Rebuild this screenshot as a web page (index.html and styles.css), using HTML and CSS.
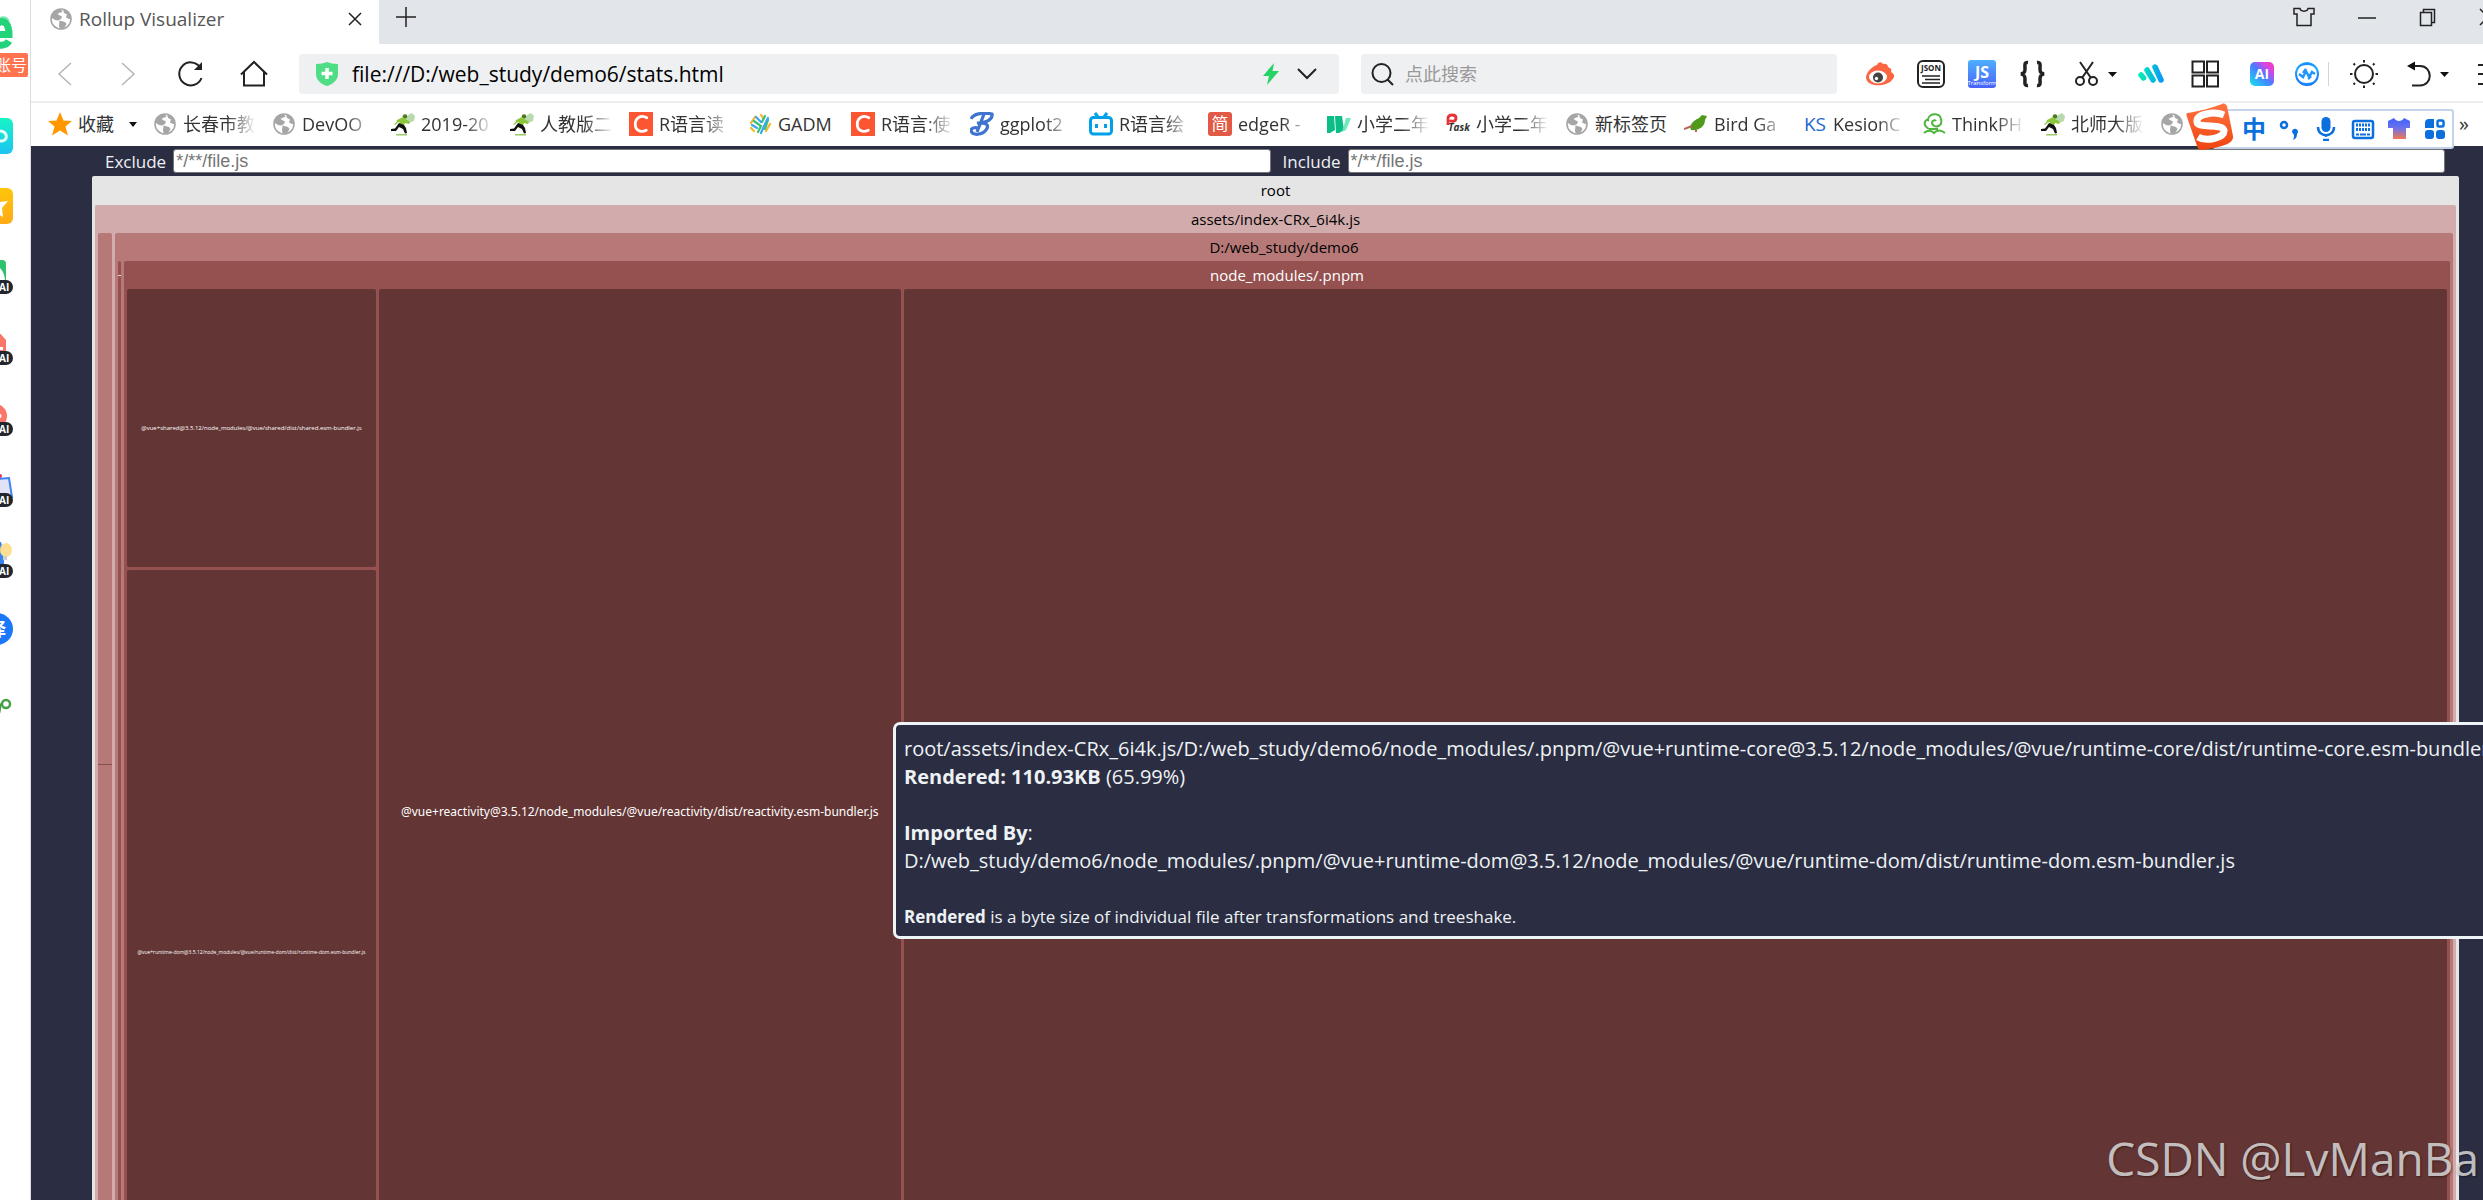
FILE: index.html
```html
<!DOCTYPE html>
<html lang="zh-CN">
<head>
<meta charset="utf-8">
<title>Rollup Visualizer</title>
<link rel="stylesheet" href="styles.css">
</head>
<body>
<svg class="defs" aria-hidden="true">
  <defs>
    <linearGradient id="teal" x1="0" y1="0" x2="0" y2="1"><stop offset="0" stop-color="#18f5c4"/><stop offset="1" stop-color="#1cc3f3"/></linearGradient>
    <linearGradient id="gold" x1="0" y1="0" x2="0" y2="1"><stop offset="0" stop-color="#ffc50a"/><stop offset="1" stop-color="#ffaa18"/></linearGradient>
    <linearGradient id="blue" x1="0" y1="0" x2="0" y2="1"><stop offset="0" stop-color="#4cb0ff"/><stop offset="1" stop-color="#4a62fa"/></linearGradient>
    <linearGradient id="aurora" x1="0" y1="1" x2="1" y2="0"><stop offset="0" stop-color="#12e6f0"/><stop offset=".5" stop-color="#4a7bff"/><stop offset=".75" stop-color="#d445e6"/><stop offset="1" stop-color="#ff3aa8"/></linearGradient>
    <linearGradient id="wave" gradientUnits="userSpaceOnUse" x1="2" y1="0" x2="27" y2="0"><stop offset="0" stop-color="#05f0b0"/><stop offset="1" stop-color="#0793ff"/></linearGradient>
    <linearGradient id="sky" x1="0" y1="0" x2="0" y2="1"><stop offset="0" stop-color="#27c3ff"/><stop offset="1" stop-color="#1167f5"/></linearGradient>
    <linearGradient id="flame" x1="0" y1="0" x2="0" y2="1"><stop offset="0" stop-color="#ff7340"/><stop offset="1" stop-color="#ee4410"/></linearGradient>
    <linearGradient id="tee" x1="0" y1="0" x2="0" y2="1"><stop offset="0" stop-color="#3c62ff"/><stop offset=".5" stop-color="#6f72e8"/><stop offset="1" stop-color="#f4774f"/></linearGradient>
    <symbol id="globe" viewBox="0 0 24 24">
      <circle cx="12" cy="12" r="10" fill="#fff" stroke="#a6a6a6" stroke-width="1.6"/>
      <path fill="#a6a6a6" d="M12 2c-5 0-9 3.600-9.800 8.500l3.800 2.500 3 .5 3-1.500 1-2.500-3-1.500-1.500-1 2.500-1.500 2.500-.5zM14 2.300l1 3.700 3 1.500-1 3 3 1.500 1.800 0c0-4.500-3.300-8.800-7.800-9.700zM10.500 13.500l5.500 1.500 1.500 2-2.500 4.500-4 .5-1-3z"/>
    </symbol>
    <symbol id="runner" viewBox="0 0 24 24">
      <path fill="#b9d9ae" d="M17 3l4-2 3 3-1 5-5 2-3-3z"/>
      <circle cx="14" cy="4.500" r="2.300" fill="#4b7a1e"/>
      <path fill="#8cc63a" d="M6 8l6-3 4 3 3 2-1 2-4-1-2 5-5-2 2-4-4 1z"/>
      <path fill="#111" d="M8 11l5 2 2 3 1 5-2 .5-2-4.500-4-2-3 4-5 0 0-2 4-.5z"/>
      <path fill="#9ccb62" d="M5 22h11v1.500H5zM3 12l3-2 1 1-3 2z"/>
    </symbol>
    <symbol id="red-c" viewBox="0 0 24 24">
      <path fill="#fc5531" d="M0 0h24v24H0z"/>
      <path fill="none" stroke="#fff" stroke-width="2.800" stroke-linecap="round" d="M17.800 5.800C12.500 2.500 6.300 5.500 6.300 12.200c0 6.300 5.200 8.600 11 6"/>
    </symbol>
  </defs>
</svg>

<div class="window">
  <aside class="sidebar">
    <button class="logo" aria-label="浏览器首页"><svg width="31" height="54" viewBox="0 0 31 54"><path fill="none" stroke="#22d37a" stroke-width="7" d="M-2 23C6 18 9 27 9 34.500H-4M9 41C6 46-1 46-4 44"/><path fill="#7be8ae" d="M0 17c4-2 9 0 10 5-2-3-6-4-10-4z"/></svg></button>
    <span class="account">账号</span>
    <button class="app" aria-label="应用"><svg width="31" height="36"><rect x="-20" width="33" height="36" rx="6" fill="url(#teal)"/><path d="M0 13c8 0 8 10 2 10H-2" fill="none" stroke="#e4fffc" stroke-width="3"/></svg></button>
    <button class="app" aria-label="收藏"><svg width="31" height="36"><rect x="-20" width="33" height="36" rx="6" fill="url(#gold)"/><path d="M-4 14L0 14 8 13 2 20 3 29-4 25z" fill="#fff"/></svg></button>
    <button class="app ai" aria-label="AI 图片"><svg width="31" height="36"><rect x="-20" y="2" width="26" height="30" rx="4" fill="#2fc26e"/><path d="M0 10c3 3 5 8 5 13H0z" fill="#fff"/></svg><span class="pill">AI</span></button>
    <button class="app ai" aria-label="AI 文档"><svg width="31" height="36"><path d="M-9 3H-1L6 11V32H-9z" fill="#fb7668"/><path d="M0 18h3v3H0z" fill="#fff"/></svg><span class="pill">AI</span></button>
    <button class="app ai" aria-label="AI 阅读"><svg width="31" height="36"><circle cx="-5" cy="16" r="12" fill="#fb7668"/><circle cx="-1" cy="16" r="2.500" fill="#fff"/></svg><span class="pill">AI</span></button>
    <button class="app ai" aria-label="AI 写作"><svg width="31" height="36"><path d="M-4 8L9 7 12 26H-4z" fill="#dfe3f5" stroke="#3f82f5" stroke-width="2"/><circle cx="0" cy="5" r="2" fill="#e8305e"/></svg><span class="pill">AI</span></button>
    <button class="app ai" aria-label="AI 灵感"><svg width="31" height="36"><path d="M-6 0H1L4 10V24H-6z" fill="#3a82f2"/><ellipse cx="6" cy="8" rx="6" ry="7" fill="#fddf92"/><path d="M3 14h4v4H3z" fill="#cfd0c8"/></svg><span class="pill">AI</span></button>
    <button class="app translate" aria-label="翻译"><span>译</span></button>
    <button class="app" aria-label="更多"><svg width="31" height="36"><g fill="none" stroke="#45a049" stroke-width="2.500"><ellipse cx="6" cy="14" rx="4" ry="4"/><path d="M-2 15c2-3 3 0 1 8"/></g></svg></button>
  </aside>

  <div class="browser">
    <header class="tabs">
      <div class="tab">
        <svg width="24" height="24"><use href="#globe"/></svg>
        <span class="tab-title">Rollup Visualizer</span>
        <button aria-label="关闭标签"><svg width="14" height="14"><path d="M1 1L13 13M13 1L1 13" class="line"/></svg></button>
      </div>
      <button class="new-tab" aria-label="新建标签"><svg width="20" height="20"><path d="M10 0V20M0 10H20" class="line"/></svg></button>
      <div class="win-controls">
        <button aria-label="皮肤"><svg width="22" height="20"><path d="M1 1.500H7C7.500 5 14.500 5 15 1.500H21V7H18V18.500H4V7H1z" class="line"/></svg></button>
        <button aria-label="最小化"><svg width="20" height="20"><path d="M1 11H19" class="line"/></svg></button>
        <button aria-label="还原"><svg width="18" height="20"><path d="M1.500 5.500H12.500V18.500H1.500zM4.500 5V2.500H15.500V15.500H13" class="line"/></svg></button>
        <button aria-label="关闭"><svg width="18" height="20"><path d="M1 2L17 18M17 2L1 18" class="line"/></svg></button>
      </div>
    </header>

    <div class="toolbar">
      <nav class="nav">
        <button aria-label="后退"><svg width="28" height="28"><path d="M20 3L8 14 20 25" class="line faint"/></svg></button>
        <button aria-label="前进"><svg width="28" height="28"><path d="M8 3L20 14 8 25" class="line faint"/></svg></button>
        <button aria-label="刷新"><svg width="28" height="28"><path d="M24.500 18A11.500 11.500 0 1 1 23 7" class="line bold"/><path d="M25 2v8h-8z" fill="#222"/></svg></button>
        <button aria-label="主页"><svg width="28" height="28"><path d="M1 14.500L14 2 27 14.500M4 12V25.500H24V12" class="line bold"/></svg></button>
      </nav>
      <div class="field address">
        <svg width="22" height="24"><path d="M0 2C5 2 8 1 11 0 14 1 17 2 22 2V12C22 18 17 22 11 24 5 22 0 18 0 12z" fill="#4fdd86"/><path d="M11 6V17M5.500 11.500H16.500" stroke="#fff" stroke-width="3.500"/></svg>
        <input type="text" aria-label="地址" value="file:///D:/web_study/demo6/stats.html">
        <button aria-label="极速模式"><svg width="18" height="22"><path d="M12 0L1 13H7L5 22 17 8H10.500z" fill="#25d366"/></svg></button>
        <button aria-label="展开"><svg width="20" height="22"><path d="M1 6L10 15 19 6" class="line bold"/></svg></button>
      </div>
      <div class="field search">
        <svg width="24" height="24"><circle cx="10.500" cy="11" r="9" class="line bold"/><path d="M16.500 17.500L22 23" class="line bold"/></svg>
        <input type="text" aria-label="搜索" placeholder="点此搜索">
      </div>
      <div class="tools">
        <button aria-label="微博"><svg width="28" height="28"><path fill="#fb6541" d="M0 17C1 11 7 6 11 5c1-3 4-4 6-1 2-1 5 0 5 3 3 1 4 3 3 5 4 2 4 5 1 8-5 7-26 8-26-3z"/><ellipse cx="12" cy="17" rx="9" ry="6.500" fill="#fff"/><circle cx="12" cy="17.500" r="5" fill="#444"/><circle cx="10.500" cy="18.500" r="1.700" fill="#fff"/></svg></button>
        <button aria-label="JSON"><svg width="28" height="28"><rect x="1" y="1" width="26" height="26" rx="5" class="line bold"/><text x="14" y="11" class="mini dark">JSON</text><path d="M5 16H23M8 19.500H23M5 23H23" class="line"/></svg></button>
        <button aria-label="JS Transform"><svg width="28" height="28"><rect width="28" height="28" rx="3" fill="url(#blue)"/><text x="14" y="18" class="big">JS</text><text x="14" y="25" class="mini thin">Transform</text></svg></button>
        <button aria-label="格式化"><svg width="28" height="28"><path d="M9 2.500C5 2 6 5 6 9 6 13 4.500 13.500 2 14 4.500 14.500 6 15 6 19 6 23 5 26 9 25.500M18 2.500C22 2 21 5 21 9 21 13 22.500 13.500 25 14 22.500 14.500 21 15 21 19 21 23 22 26 18 25.500" fill="none" stroke="#222" stroke-width="3.500"/></svg></button>
        <button aria-label="截图"><svg width="44" height="28"><path d="M7 2L18 18M20 2L9 18" class="line bold"/><circle cx="7" cy="21" r="4" class="line bold"/><circle cx="20" cy="21" r="4" class="line bold"/><path d="M35 12h9l-4.500 5z" fill="#111"/></svg></button>
        <button aria-label="音乐"><svg width="28" height="28"><path d="M4 15L6.500 18M10 10L16 20M18 7L24 20" fill="none" stroke="url(#wave)" stroke-width="5.500" stroke-linecap="round"/></svg></button>
        <button aria-label="应用"><svg width="28" height="28"><path d="M1.500 1.500H13V12.500H1.500zM16 1.500H27V12.500H16zM1.500 15.500H13V26.500H1.500zM16 15.500H27V26.500H16z" class="line bold"/></svg></button>
        <button aria-label="AI 助手"><svg width="28" height="28"><rect x="2" y="2" width="24" height="24" rx="5" fill="url(#aurora)"/><text x="14" y="19" class="big slim">AI</text></svg></button>
        <button aria-label="同步"><svg width="28" height="28"><circle cx="14" cy="14" r="11" fill="#fff" stroke="url(#sky)" stroke-width="2"/><path d="M4 8C9 1 20 1 24 9 19 4 11 4 4 8zM24 20C19 27 8 27 4 19 9 24 17 24 24 20z" fill="#1a8cff"/><path d="M6 14L10 17 13 11 16 17 19 12 22 14M10 13L13 9M15 19L18 16" fill="none" stroke="#2196ff" stroke-width="2.500"/></svg></button>
        <span class="divider"></span>
        <button aria-label="护眼"><svg width="28" height="28"><circle cx="14" cy="14" r="9" class="line bold"/><path d="M14 0V2.500M14 25.500V28M0 14H2.500M25.500 14H28M3.500 3.500L5 5M23 23L24.500 24.500M24.500 3.500L23 5M5 23L3.500 24.500" class="line bold"/></svg></button>
        <button aria-label="恢复"><svg width="44" height="28"><path d="M8 6H15C28 6 28 25.500 15 25.500H7" class="line bold"/><path d="M2 6L10 1.500V10.500zM35 12h9l-4.500 5z" fill="#111"/></svg></button>
        <button aria-label="菜单"><svg width="28" height="28"><path d="M1 5H27M1 14H27M1 24H27" class="line bold"/></svg></button>
      </div>
    </div>

    <nav class="bookmarks">
      <button class="fav"><svg width="24" height="24"><path fill="#ff9800" d="M12 0L15.500 8.500 24 9 17.500 14.500 20 23.500 12 18.500 4 23.500 6.500 14.500 0 9 8.500 8.500z"/></svg><span>收藏</span><svg class="caret" width="8" height="5"><path d="M0 0H8L4 5z" fill="#111"/></svg></button>
      <a href="#"><svg><use href="#globe"/></svg><span class="fade">长春市教</span></a>
      <a href="#"><svg><use href="#globe"/></svg><span class="fade">DevOO</span></a>
      <a href="#"><svg><use href="#runner"/></svg><span class="fade">2019-20</span></a>
      <a href="#"><svg><use href="#runner"/></svg><span class="fade">人教版二</span></a>
      <a href="#"><svg><use href="#red-c"/></svg><span class="fade">R语言读</span></a>
      <a href="#"><svg viewBox="0 0 24 24"><g fill="none" stroke-width="2.200" stroke-linecap="round"><path stroke="#f6b52c" d="M3 11L7 5M3 16L6 19M13 3L15 6M18 19L22 12"/><path stroke="#3cc06f" d="M6 9L13 14 10 20M17 4L14 10M20 8L17 17"/><path stroke="#3aa7ee" d="M4 13L9 16M8 5L13 10M13 21L17 12 20 6"/></g></svg><span class="short">GADM</span></a>
      <a href="#"><svg><use href="#red-c"/></svg><span class="fade">R语言:使</span></a>
      <a href="#"><svg viewBox="0 0 24 24"><path fill="none" stroke="#3f73d0" stroke-width="3.200" d="M1 7C3 2 12 0 22 2 23 7 17 11 7 11 16 10 20 13 16 18 12 23 3 24 1 19 1 15 7 15 9 17M14 2L7 20"/></svg><span class="fade">ggplot2</span></a>
      <a href="#"><svg viewBox="0 0 24 24"><rect x="1.500" y="5.500" width="21" height="16.500" rx="3" fill="#fff" stroke="#00a1e9" stroke-width="3"/><path d="M6 1L9 5M18 1L15 5M7.500 12V16M16.500 12V16" stroke="#00a1e9" stroke-width="3"/></svg><span class="fade">R语言绘</span></a>
      <a href="#"><svg viewBox="0 0 24 24"><rect width="24" height="24" rx="3" fill="#e25a45"/><text x="12" y="18" class="glyph">简</text></svg><span class="fade">edgeR -</span></a>
      <a href="#"><svg viewBox="0 0 24 24"><path fill="#0bbd87" d="M0 4H7L8 18 3 21H0zM8 4H15L17 18 12 21H9z"/><path fill="#6fe8bc" d="M19 6H24L19 18 15 20z"/></svg><span class="fade">小学二年</span></a>
      <a href="#"><svg viewBox="0 0 24 24"><path fill="none" stroke="#e53238" stroke-width="2.800" d="M2 13V6C2 2 10 2 10 6S5 10 4 8"/><text x="13" y="19" class="task">Task</text></svg><span class="fade">小学二年</span></a>
      <a href="#"><svg><use href="#globe"/></svg><span>新标签页</span></a>
      <a href="#"><svg viewBox="0 0 24 24"><path fill="#4f9a1b" d="M6 15C8 9 13 7 15 6L18 3 23 4 21 8C21 15 14 19 7 18z"/><path d="M0 17L8 14M12 18V20" stroke="#b5655b" stroke-width="2"/></svg><span class="fade">Bird Ga</span></a>
      <a href="#"><svg viewBox="0 0 24 24"><text x="12" y="19" class="ks">KS</text></svg><span class="fade">KesionC</span></a>
      <a href="#"><svg viewBox="0 0 24 24"><path fill="none" stroke="#4db53c" stroke-width="2" d="M7 17C0 13 3 7 6 8 6 1 18 0 19 7 21 14 14 16 11 13 8 9 13 7 14 9M2 21C7 17 10 19 12 21 14 19 18 17 23 21M7 17H16"/></svg><span class="fade">ThinkPH</span></a>
      <a href="#"><svg><use href="#runner"/></svg><span class="fade">北师大版</span></a>
      <a href="#" aria-label="书签"><svg><use href="#globe"/></svg></a>
      <button class="more" aria-label="更多书签">»</button>
      <div class="ime">
        <svg class="sogou" width="48" height="48" viewBox="0 0 48 48"><path fill="url(#flame)" d="M2 10C14 8 26 5 36 1 38 0 40 1 41 3L47 33C48 40 38 44 16 47 13 47 12 46 11 43L1 14C0 12 0 10 2 10z"/><path fill="none" stroke="#fff" stroke-width="7" d="M38 12C28 8 10 11 11 19 12 26 38 20 38 28 38 35 20 39 12 34"/></svg>
        <button aria-label="中文"><b>中</b></button>
        <button aria-label="标点"><svg width="24" height="24"><circle cx="6" cy="8" r="3" fill="none" stroke="#0b70de" stroke-width="2.500"/><path d="M14 15a3 3 0 1 1 5 2c0 3-1 5-4 6 1-2 1-3 1-5z" fill="#0b70de"/></svg></button>
        <button aria-label="语音"><svg width="24" height="24"><rect x="7.500" y="0" width="9" height="15" rx="4.500" fill="#0b70de"/><path d="M4 10C4 21 20 21 20 10M12 18V20M9 23H15" fill="none" stroke="#0b70de" stroke-width="2.500"/></svg></button>
        <button aria-label="键盘"><svg width="24" height="24"><rect x="2" y="4" width="20" height="17" rx="2" fill="#fff" stroke="#0b70de" stroke-width="2.500"/><path d="M5 8H19M5 12.500H19" stroke="#0b70de" stroke-width="3" stroke-dasharray="2 1"/><path d="M5 17.500H19" stroke="#0b70de" stroke-width="2" stroke-dasharray="3 1 6 1"/></svg></button>
        <button aria-label="换肤"><svg width="24" height="24"><path fill="url(#tee)" d="M1 4L7 1C9 5 15 5 17 1L23 4V11H19V22H6V11H1z"/></svg></button>
        <button aria-label="工具箱"><svg width="24" height="24"><g fill="#0b70de"><path d="M6 2H11V11H2V6a4 4 0 0 1 4-4z"/><rect x="2" y="13" width="9" height="9" rx="3"/><rect x="13" y="13" width="9" height="9" rx="3"/></g><rect x="14.500" y="3.500" width="6" height="6" rx="1.500" fill="none" stroke="#0b70de" stroke-width="2.500"/></svg></button>
      </div>
    </nav>

    <main class="page">
      <form class="filters">
        <label for="exclude">Exclude</label>
        <input id="exclude" type="text" placeholder="*/**/file.js">
        <label for="include">Include</label>
        <input id="include" type="text" placeholder="*/**/file.js">
      </form>
      <section class="node root">
        <h2>root</h2>
        <div class="node assets">
          <h2>assets/index-CRx_6i4k.js</h2>
          <div class="columns">
            <div class="node strip"><hr></div>
            <div class="node project">
              <h2>D:/web_study/demo6</h2>
              <div class="columns">
                <div class="node sliver"><hr></div>
                <div class="node modules">
                  <h2>node_modules/.pnpm</h2>
                  <div class="columns">
                    <div class="stack">
                      <div class="leaf shared">@vue+shared@3.5.12/node_modules/@vue/shared/dist/shared.esm-bundler.js</div>
                      <div class="leaf dom">@vue+runtime-dom@3.5.12/node_modules/@vue/runtime-dom/dist/runtime-dom.esm-bundler.js</div>
                    </div>
                    <div class="leaf reactivity">@vue+reactivity@3.5.12/node_modules/@vue/reactivity/dist/reactivity.esm-bundler.js</div>
                    <div class="leaf core"></div>
                  </div>
                </div>
              </div>
            </div>
          </div>
        </div>
      </section>
      <div class="tooltip" role="tooltip">
        <p>root/assets/index-CRx_6i4k.js/D:/web_study/demo6/node_modules/.pnpm/@vue+runtime-core@3.5.12/node_modules/@vue/runtime-core/dist/runtime-core.esm-bundler.js</p>
        <p><b>Rendered: 110.93KB</b> (65.99%)</p>
        <br>
        <p><b>Imported By</b>:</p>
        <p>D:/web_study/demo6/node_modules/.pnpm/@vue+runtime-dom@3.5.12/node_modules/@vue/runtime-dom/dist/runtime-dom.esm-bundler.js</p>
        <br>
        <p class="note"><b>Rendered</b> is a byte size of individual file after transformations and treeshake.</p>
      </div>
      <div class="watermark">CSDN @LvManBa</div>
    </main>
  </div>
</div>
</body>
</html>
```
FILE: styles.css
```css
* { box-sizing: border-box; }
body {
  margin: 0;
  height: 100vh;
  overflow: hidden;
  background: #fff;
  font-family: "Open Sans", "Noto Sans CJK SC", sans-serif;
  color: #333;
}
button, input { font: inherit; color: inherit; border: 0; padding: 0; margin: 0; background: none; }
button { display: flex; align-items: center; flex: none; }
svg { display: block; flex: none; }
p, h2 { margin: 0; font-weight: 400; }
a { color: inherit; text-decoration: none; }
.defs { position: absolute; width: 0; height: 0; }

.line { fill: none; stroke: #222; stroke-width: 1.5; }
.bold { stroke-width: 2; }
.faint { stroke: #b5b5b5; }

.window { display: flex; height: 100%; }

/* left app rail, partly off screen */
.sidebar {
  flex: none;
  width: 31px;
  border-right: 1px solid #ddd;
  display: flex;
  flex-direction: column;
  align-items: flex-start;
  overflow: hidden;
}
.logo { height: 53px; }
.account {
  width: 28px;
  height: 24px;
  margin-bottom: 41px;
  border-radius: 0 2px 2px 0;
  background: #ff7350;
  color: #fff;
  font-size: 16px;
  line-height: 24px;
  white-space: nowrap;
  display: flex;
  justify-content: flex-end;
  padding-right: 1px;
}
.app { position: relative; width: 31px; height: 36px; margin-bottom: 34px; }
.ai { margin-bottom: 35px; }
.pill {
  position: absolute;
  left: -6px;
  bottom: 0;
  width: 19px;
  height: 14px;
  border-radius: 7px;
  background: #22262e;
  color: #fff;
  font-size: 10px;
  font-weight: 700;
  line-height: 14px;
  padding-left: 5px;
  text-align: left;
}
.translate { height: 32px; margin-bottom: 45px; }
.translate span {
  width: 32px;
  height: 32px;
  margin-left: -19px;
  flex: none;
  border-radius: 50%;
  background: #1c78fb;
  color: #fff;
  font-size: 18px;
  font-weight: 700;
  line-height: 32px;
  text-align: center;
}

.browser { flex: 1; min-width: 0; display: flex; flex-direction: column; }

.tabs { flex: none; height: 44px; display: flex; background: #e2e6eb; overflow: hidden; }
.tab { width: 348px; padding: 0 17px 6px 18px; display: flex; align-items: center; background: #fff; }
.tab-title { flex: 1; margin-left: 6px; font-size: 19px; color: #555; }
.new-tab { margin: 0 auto 10px 17px; }
.win-controls { display: flex; gap: 42px; padding-bottom: 10px; margin-right: -14px; }

.toolbar {
  flex: none;
  height: 59px;
  border-bottom: 2px solid #eee;
  display: flex;
  align-items: center;
  padding: 2px 0 0 20px;
  overflow: hidden;
}
.nav { display: flex; gap: 35px; width: 248px; flex: none; }
.field {
  height: 40px;
  border-radius: 4px;
  background: #eff0f2;
  display: flex;
  align-items: center;
  min-width: 0;
}
.field input { flex: 1; min-width: 0; outline: none; }
.address { flex: 1001 1 0; padding: 0 22px 0 17px; }
.address input { margin-left: 14px; font-size: 21px; color: #000; }
.address button + button { margin-left: 17px; }
.search { flex: 466 1 0; margin: 0 29px 0 22px; padding-left: 10px; }
.search input { margin-left: 10px; font-size: 18px; }
.search input::placeholder { color: #999; opacity: 1; }
.tools {
  flex: none;
  display: grid;
  align-items: center;
  grid-template-columns: 51px 51px 51px 54px 64px 54px 57px 45px 35px 22px 55px 72px 6px;
}
.divider { width: 1px; height: 24px; background: #d5d5d5; }
.mini { font-size: 8px; font-weight: 700; text-anchor: middle; fill: #fff; }
.dark { fill: #222; }
.thin { font-size: 6px; font-weight: 400; }
.big { font-size: 16px; font-weight: 700; text-anchor: middle; fill: #fff; }
.slim { font-size: 14px; }

.bookmarks {
  position: relative;
  flex: none;
  height: 43px;
  display: flex;
  align-items: center;
  gap: 16px;
  padding: 0 0 2px 17px;
  font-size: 18px;
  line-height: 28px;
  white-space: nowrap;
}
.bookmarks a { display: flex; align-items: center; gap: 6px; flex: none; }
.bookmarks a svg { width: 24px; height: 24px; }
.bookmarks a span { width: 73px; overflow: hidden; }
.bookmarks a .short { width: 57px; }
.bookmarks .fade {
  -webkit-mask-image: linear-gradient(90deg, #000 60%, transparent);
  mask-image: linear-gradient(90deg, #000 60%, transparent);
}
.fav { gap: 6px; }
.caret { margin: 2px 0 0 9px; }
.more { margin-left: auto; margin-right: 14px; font-size: 20px; }
.glyph { font-size: 17px; fill: #fff; text-anchor: middle; }
.task { font-size: 10px; font-weight: 700; font-style: italic; text-anchor: middle; fill: #333; }
.ks { font-size: 19px; text-anchor: middle; fill: #2266d0; }

/* floating input-method bar */
.ime {
  position: absolute;
  right: 29px;
  top: 6px;
  z-index: 3;
  width: 242px;
  height: 40px;
  padding: 0 5px 0 28px;
  border: 2px solid #c3d4ea;
  border-radius: 3px;
  background: #fff;
  display: flex;
  align-items: center;
  justify-content: space-between;
  color: #0b70de;
}
.ime b { width: 24px; font-size: 24px; line-height: 28px; }
.sogou { position: absolute; left: -28px; top: -8px; }

.page {
  position: relative;
  flex: 1;
  min-height: 0;
  overflow: hidden;
  background: #2b2d42;
  padding: 3px 24px 0 61px;
}
.filters {
  display: flex;
  align-items: center;
  margin: 0 14px 3px 13px;
  color: #edf2f4;
  font-size: 17px;
}
.filters input {
  flex: 1;
  min-width: 0;
  height: 24px;
  margin: 0 12px 0 7px;
  padding: 0 2px;
  border: 1px solid #767676;
  border-radius: 3px;
  background: #fff;
  font-family: "Liberation Sans", sans-serif;
  font-size: 18px;
}
.filters input:last-child { margin-right: 0; }
.filters input::placeholder { color: #757575; opacity: 1; }

/* treemap: each node is a header above its children */
.node {
  display: flex;
  flex-direction: column;
  padding: 0 3px 3px;
  border-radius: 2px;
  min-width: 0;
}
.node > h2 { flex: none; height: 28px; font-size: 15px; line-height: 28px; text-align: center; color: #000; }
.node > .node, .columns { flex: 1; min-height: 0; }
.columns { display: flex; gap: 3px; }
.root { height: 1169px; background: #e5e5e5; }
.root > h2 { height: 29px; }
.assets { background: #d2acac; }
.strip { flex: none; width: 14px; background: #b67978; }
.project { flex: 1; background: #b67978; }
.sliver { flex: none; width: 3px; padding: 0; background: #955150; }
.modules { flex: 1; background: #955150; }
.modules > h2, .project > h2 { height: 28px; }
.modules > h2 { color: #fff; }
.node hr { width: 100%; margin: 531px 0 0; border: 0; border-top: 1px solid #805050; }
.strip { padding: 0; }
.sliver hr { margin-top: 14px; border-color: #ddd; }
.stack { flex: 249 1 0; min-width: 0; display: flex; flex-direction: column; gap: 3px; }
.leaf {
  display: flex;
  align-items: center;
  justify-content: center;
  min-width: 0;
  border-radius: 2px;
  background: #633534;
  color: #fff;
  white-space: nowrap;
}
.shared { flex: 279 1 0; font-size: 6px; }
.dom { flex: 764 1 0; font-size: 5px; }
.reactivity { flex: 522 1 0; font-family: "Noto Sans", sans-serif; font-size: 12px; }
.core { flex: 1544 1 0; }

.tooltip {
  position: absolute;
  left: 862px;
  top: 576px;
  padding: 10px 8px 5px;
  border: 3px solid #edf5f6;
  border-radius: 7px;
  background: #2b2d42;
  color: #edf2f4;
  font-size: 20px;
  line-height: 28px;
  white-space: nowrap;
}
.note { font-size: 17px; }
.watermark {
  position: absolute;
  right: 4px;
  bottom: 10px;
  font-size: 46px;
  line-height: 64px;
  color: rgba(225, 225, 225, .82);
  text-shadow: 1px 1px 2px rgba(0, 0, 0, .4);
}
```
